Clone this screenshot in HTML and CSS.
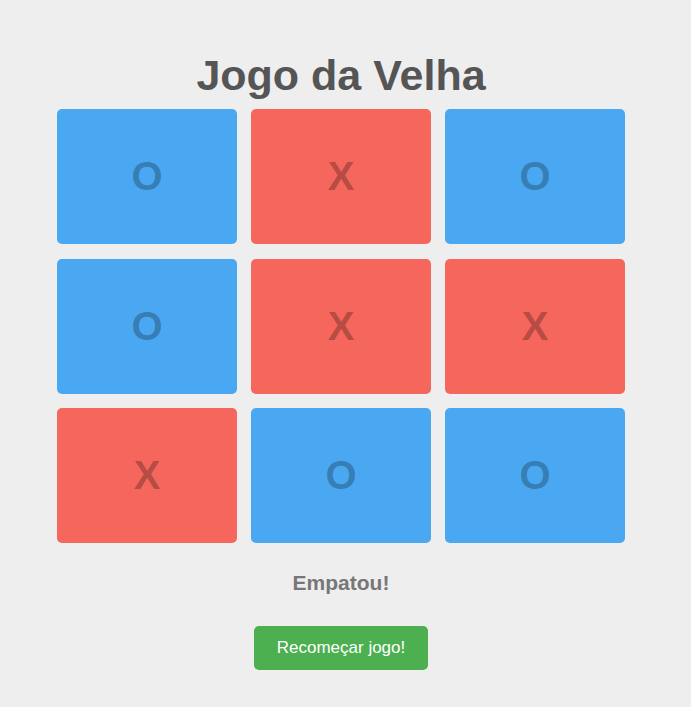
FILE: index.html
```html
<!DOCTYPE html>
<html lang="pt">
<head>
<meta charset="utf-8">
<title>Jogo da Velha</title>
<link rel="stylesheet" href="styles.css">
</head>
<body>
<main class="game">
  <h1 class="title">Jogo da Velha</h1>
  <div class="board">
    <div class="cell cell-o">O</div>
    <div class="cell cell-x">X</div>
    <div class="cell cell-o">O</div>
    <div class="cell cell-o">O</div>
    <div class="cell cell-x">X</div>
    <div class="cell cell-x">X</div>
    <div class="cell cell-x">X</div>
    <div class="cell cell-o">O</div>
    <div class="cell cell-o">O</div>
  </div>
  <p class="status">Empatou!</p>
  <button class="restart" type="button">Recomeçar jogo!</button>
</main>
</body>
</html>
```

FILE: styles.css
```css
html, body {
  margin: 0;
  padding: 0;
  background: #eeeeee;
}

body {
  font-family: "Liberation Sans", Arial, sans-serif;
}

.game {
  width: 682px;
  display: flex;
  flex-direction: column;
  align-items: center;
}

.title {
  margin: 50px 0 9px;
  font-size: 43px;
  line-height: 50px;
  font-weight: bold;
  color: #555555;
}

.board {
  display: grid;
  grid-template-columns: repeat(3, 180px);
  grid-template-rows: repeat(3, 135px);
  column-gap: 14px;
  row-gap: 14.5px;
}

.cell {
  display: flex;
  align-items: center;
  justify-content: center;
  border-radius: 5px;
  font-size: 40px;
  font-weight: bold;
  color: rgba(0, 0, 0, 0.27);
}

.cell-o {
  background: #4aa8f2;
}

.cell-x {
  background: #f5665d;
}

.status {
  margin: 28px 0 0;
  font-size: 21px;
  line-height: 24px;
  font-weight: bold;
  color: #777777;
}

.restart {
  margin-top: 31px;
  width: 174px;
  height: 44px;
  padding: 0;
  border: none;
  border-radius: 5px;
  background: #4caf50;
  color: #ffffff;
  font-family: "Liberation Sans", Arial, sans-serif;
  font-size: 17px;
  cursor: pointer;
}
```
